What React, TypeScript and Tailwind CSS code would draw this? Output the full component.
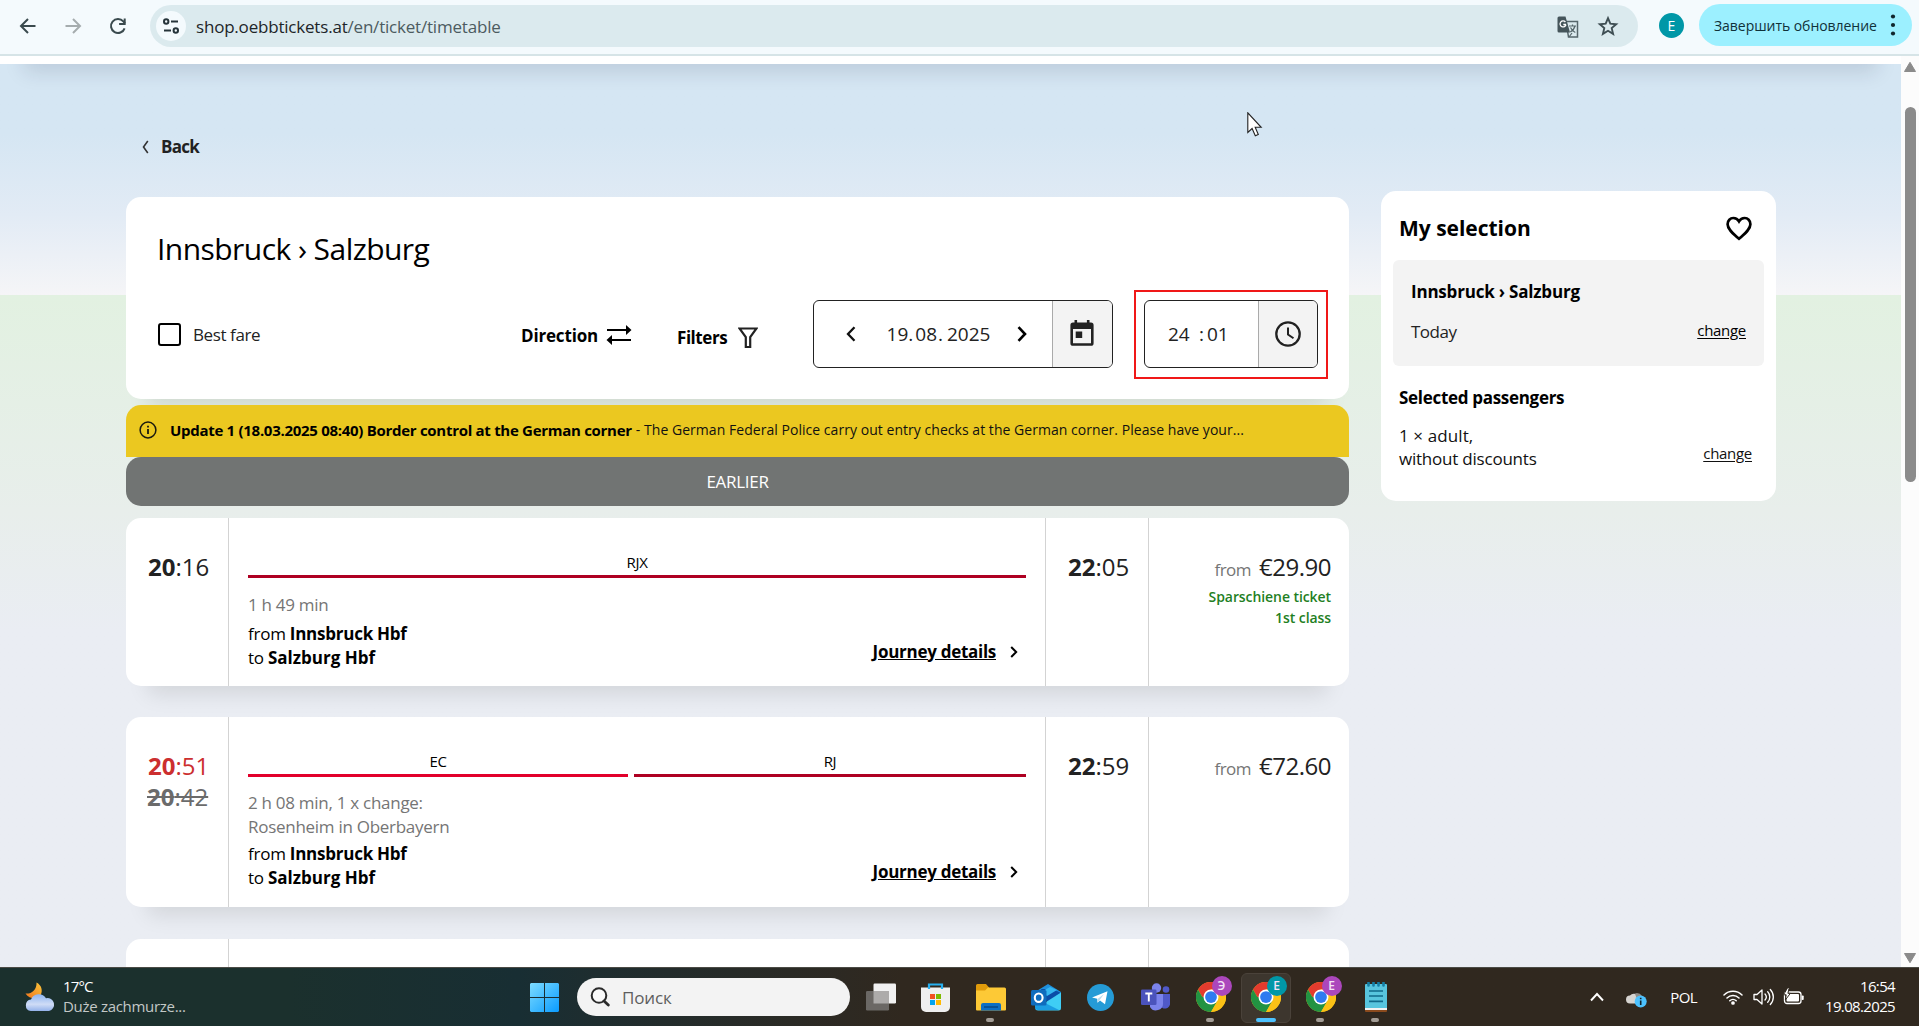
import React from "react";

/* ---------- Browser toolbar ---------- */

function Toolbar() {
  return (
    <header className="relative z-20 flex h-14 shrink-0 items-start border-b-2 border-[#d6e4e7] bg-[#f4fafd]">
      <div className="flex h-[52px] w-[150px] shrink-0 items-center gap-[21px] pl-4">
        <svg viewBox="0 0 24 24" className="size-6" fill="none" stroke="#3a4a4e" strokeWidth="2">
          <path d="M19.5 12H5.5M12 5l-7 7 7 7" />
        </svg>
        <svg viewBox="0 0 24 24" className="size-6" fill="none" stroke="#a5acae" strokeWidth="2">
          <path d="M4.500 12h14M12 5l7 7-7 7" />
        </svg>
        <svg viewBox="0 0 24 24" className="size-6" fill="none" stroke="#3a4a4e" strokeWidth="2">
          <path d="M18.600 14.300A7 7 0 1 1 17.300 7.400L19 9.300" />
          <path d="M18.700 4.500v5.600h-5.600" />
        </svg>
      </div>
      <div className="mt-[5px] flex h-[42px] w-[1488px] shrink-0 items-center rounded-full bg-[#dbeaee] pr-[18px] pl-1.5">
        <div className="flex size-[30px] items-center justify-center rounded-full bg-[#f4fafd]">
          <svg viewBox="0 0 18 18" className="size-[18px]" fill="none" stroke="#26343a" strokeWidth="2">
            <circle cx="4.200" cy="4.500" r="2.200" />
            <path d="M9 4.500h7M2 13.500h7" />
            <circle cx="13.800" cy="13.500" r="2.200" />
          </svg>
        </div>
        <div className="ml-2.5 pt-px text-[17px] tracking-[-0.2px] text-[#1d2528]">
          shop.oebbtickets.at<span className="text-[#4c5b60]">/en/ticket/timetable</span>
        </div>
        <svg viewBox="0 0 22 22" className="mt-px ml-auto size-[22px]" fill="none">
          <path d="M9 5.500h11.500v15.500h-9z" stroke="#56666b" strokeWidth="1.500" />
          <path d="M0.500 2a1.500 1.500 0 0 1 1.500-1.500h6.500L13 16.500H2A1.500 1.500 0 0 1 .5 15z" fill="#45555a" />
          <path d="M9 8.500H6.300M8.400 6A3 3 0 1 0 9 8.500" stroke="#fff" strokeWidth="1.300" />
          <path d="M12 10h7M15.500 8.500V10M18 10c-.8 3-2.600 5-4.800 6M13.500 11.500c1 2 2.600 4 4.800 5M12 21l3-4" stroke="#56666b" strokeWidth="1.200" />
        </svg>
        <svg viewBox="0 0 24 24" className="ml-[17px] size-6" fill="none" stroke="#3f4f54" strokeWidth="1.900">
          <path d="M12 4.200l2.300 5.500 5.900.5-4.500 3.900 1.400 5.800-5.100-3.100-5.100 3.100 1.400-5.800-4.500-3.900 5.900-.5z" />
        </svg>
      </div>
      <div className="mt-[13px] ml-[21px] flex size-[25px] shrink-0 items-center justify-center rounded-full bg-[#0097a7] text-[14px] text-white">
        E
      </div>
      <div className="mt-1 ml-[15px] flex h-[42px] w-[213px] shrink-0 items-center rounded-full bg-[#9cf0ff] pl-[15px]">
        <span className="text-[14px] tracking-[-0.05px] whitespace-nowrap text-[#10323a]">Завершить обновление</span>
        <svg viewBox="0 0 6 24" className="ml-[13px] h-6 w-1.5 shrink-0" fill="#10262c">
          <circle cx="3" cy="3.500" r="2.100" />
          <circle cx="3" cy="12" r="2.100" />
          <circle cx="3" cy="20.500" r="2.100" />
        </svg>
      </div>
    </header>
  );
}

/* ---------- Search header ---------- */

function SearchCard() {
  return (
    <section className="h-[202px] rounded-[15px] bg-white pl-8 shadow-[0_30px_20px_-22px_rgba(0,0,0,0.1)]">
      <h1 className="-ml-px h-[93px] pt-8 text-[30px] leading-10 tracking-[-0.55px] text-black">Innsbruck › Salzburg</h1>
      <div className="flex h-[89px] items-center">
        <label className="flex w-[363px] items-center gap-3 text-[17px] tracking-[-0.4px] text-[#222]">
          <span className="-mt-px size-[23px] rounded-[3px] border-2 border-black" />
          <span className="pt-px">Best fare</span>
        </label>
        <button className="flex w-[156px] items-center gap-2 text-[17px] font-bold tracking-[-0.17px]">
          <span className="pt-0.5">Direction</span>
          <svg viewBox="0 0 26 20" className="h-5 w-[26px]" fill="none" stroke="#000" strokeWidth="2.200">
            <path d="M1 5h22M3 15h22" />
            <path d="M20 0l5.500 5-5.500 5zM6 10l-5.500 5L6 20z" fill="#000" stroke="none" />
          </svg>
        </button>
        <button className="flex w-[136px] items-center gap-3 pt-1.5 text-[17px] font-bold tracking-[-0.45px]">
          Filters
          <svg viewBox="0 0 20 21" className="-ml-px h-[21px] w-5" fill="none" stroke="#222" strokeWidth="2.200">
            <path d="M1.500 1.500h17l-6.300 8.700V20H7.800v-9.800z" />
          </svg>
        </button>
        <div className="-mt-px flex h-[68px] w-[300px] overflow-hidden rounded-md border border-[#222]">
          <div className="flex flex-1 items-center pl-8">
            <svg viewBox="0 0 10 16" className="h-4 w-2.5" fill="none" stroke="#111" strokeWidth="2.300">
              <path d="M8.500 1.200L2 8l6.500 6.800" />
            </svg>
            <span className="flex w-[161px] justify-center pt-px pl-1 text-[19px] text-[#222]">
              <span>19</span>
              <span className="w-[7px]">.</span>
              <span>08</span>
              <span className="w-[10px] pl-px">.</span>
              <span>2025</span>
            </span>
            <svg viewBox="0 0 10 16" className="h-4 w-2.5" fill="none" stroke="#000" strokeWidth="2.600">
              <path d="M1.500 1.200L8 8l-6.500 6.800" />
            </svg>
          </div>
          <div className="flex w-[60px] items-center justify-center border-l border-[#aaa] bg-[#f3f3f3] pr-0.5 pb-0.5">
            <svg viewBox="0 0 24 26" className="h-[26px] w-6" fill="#222">
              <path fillRule="evenodd" d="M4.500 0h2.600v2.600h9.800V0h2.600v2.600H21a2.600 2.600 0 0 1 2.600 2.600v18A2.600 2.600 0 0 1 21 25.800H3A2.600 2.600 0 0 1 .4 23.200v-18A2.600 2.600 0 0 1 3 2.600h1.500zM3 9v14.200h18V9z" />
              <path d="M5.700 11.600h6.500v6.500H5.700z" />
            </svg>
          </div>
        </div>
        <div className="ml-[21px] h-[89px] w-[194px] border-2 border-[#f01818] p-2">
          <div className="flex h-[68px] overflow-hidden rounded-md border border-[#222]">
            <div className="flex flex-1 items-center pt-px pl-[23px] text-[19px] text-[#222]">
              <span className="w-[31px]">24</span>
              <span className="w-2">:</span>
              <span>01</span>
            </div>
            <div className="flex w-[59px] items-center justify-center border-l border-[#aaa] bg-[#f3f3f3]">
              <svg viewBox="0 0 26 26" className="size-[26px]" fill="none" stroke="#222" strokeWidth="2.300">
                <circle cx="13" cy="13" r="11.700" />
                <path d="M13 6.500v7l5.500 3.800" strokeWidth="2" />
              </svg>
            </div>
          </div>
        </div>
      </div>
    </section>
  );
}

function Notice() {
  return (
    <div className="relative mt-1.5 flex h-[52px] rounded-t-[15px] bg-[#ebc820] pt-[15px] pl-[13px] text-[15px] leading-5 whitespace-nowrap text-[#111]">
      <svg viewBox="0 0 18 18" className="mt-px size-[18px] shrink-0" fill="none" stroke="#1a1a10" strokeWidth="1.500">
        <circle cx="9" cy="9" r="7.900" />
        <path d="M9 8v5M9 4.800v1.600" strokeWidth="1.800" />
      </svg>
      <span className="pl-[13px] font-bold tracking-[-0.29px] text-black">
        Update 1 (18.03.2025 08:40) Border control at the German corner
      </span>
      <span className="pl-1 text-[14px] tracking-[0.04px]">
        - The German Federal Police carry out entry checks at the German corner. Please have your...
      </span>
    </div>
  );
}

/* ---------- Journey rows ---------- */

type Leg = { name: string; color: string; width: string };
type JourneyData = {
  height: string;
  dep: [string, string];
  late?: [string, string];
  arr: [string, string];
  legs: Leg[];
  info: string[];
  infoGap: string;
  price: string;
  note?: string[];
};

const journeys: JourneyData[] = [
  {
    height: "h-[168px]",
    dep: ["20", ":16"],
    arr: ["22", ":05"],
    legs: [{ name: "RJX", color: "bg-[#ae0022]", width: "w-full" }],
    info: ["1 h 49 min"],
    infoGap: "pt-[15px] pb-[5px]",
    price: "€29.90",
    note: ["Sparschiene ticket", "1st class"],
  },
  {
    height: "h-[190px] mt-[31px]",
    dep: ["20", ":42"],
    late: ["20", ":51"],
    arr: ["22", ":59"],
    legs: [
      { name: "EC", color: "bg-[#e2002b]", width: "w-[380px]" },
      { name: "RJ", color: "bg-[#ae0022]", width: "flex-1" },
    ],
    info: ["2 h 08 min, 1 x change:", "Rosenheim in Oberbayern"],
    infoGap: "pt-3.5 pb-1",
    price: "€72.60",
  },
];

function Time({ t, className }: { t: [string, string]; className: string }) {
  return (
    <div className={className}>
      <b>{t[0]}</b>
      {t[1]}
    </div>
  );
}

const timeBase = "text-[24px] leading-6 tracking-[0px] whitespace-nowrap";

function Journey({ j }: { j: JourneyData }) {
  return (
    <article
      className={`${j.height} grid shrink-0 grid-cols-[103px_817px_103px_1fr] rounded-[15px] bg-white shadow-[0_30px_20px_-22px_rgba(0,0,0,0.1)]`}
    >
      <div className="border-r border-[#d3d3d3] pt-[37px] pl-[22px]">
        {j.late && <Time t={j.late} className={`${timeBase} mb-[7px] text-[#cc2f2f]`} />}
        <Time t={j.dep} className={`${timeBase} ${j.late ? "-ml-px text-[#6b6b6b] line-through decoration-2" : "text-[#222]"}`} />
      </div>
      <div className="border-r border-[#d3d3d3] px-[19px] pt-[34px]">
        <div className="flex gap-1.5">
          {j.legs.map((leg) => (
            <div key={leg.name} className={leg.width}>
              <div className="h-[23px] text-center text-[15px] leading-5 tracking-[-0.3px] text-black">{leg.name}</div>
              <div className={`${leg.color} h-[3px]`} />
            </div>
          ))}
        </div>
        <div className={`${j.infoGap} text-[17px] leading-[23.500px] tracking-[-0.28px] text-[#757575]`}>
          {j.info.map((line) => (
            <div key={line}>{line}</div>
          ))}
        </div>
        <div className="flex items-end justify-between text-[17px] leading-6 text-black">
          <div className="tracking-[-0.25px]">
            <div>
              from <b>Innsbruck Hbf</b>
            </div>
            <div>
              to <b className="tracking-[0px]">Salzburg Hbf</b>
            </div>
          </div>
          <a className="flex items-center pb-1.5 font-bold tracking-[-0.28px]">
            <span className="underline underline-offset-1">Journey details</span>
            <svg viewBox="0 0 8 12" className="mr-2 ml-3.5 h-3 w-2" fill="none" stroke="#000" strokeWidth="2">
              <path d="M1.200 1L6.200 6l-5 5" />
            </svg>
          </a>
        </div>
      </div>
      <div className="border-r border-[#d3d3d3] pt-[37px] pl-[22px]">
        <Time t={j.arr} className={`${timeBase} text-[#222]`} />
      </div>
      <div className="pt-[35px] pr-[18px] text-right">
        <div className="text-[24px] leading-7 tracking-[-0.5px] text-[#222]">
          <span className="mr-2 text-[17px] tracking-[-0.5px] text-[#757575]">from</span>
          {j.price}
        </div>
        <div className="mt-0.5 text-[14px] leading-[21px] font-semibold tracking-[-0.08px] text-[#1f7f24]">
          {j.note?.map((n) => (
            <div key={n}>{n}</div>
          ))}
        </div>
      </div>
    </article>
  );
}

/* ---------- Sidebar ---------- */

function Selection() {
  return (
    <aside className="mt-[127px] ml-8 h-[310px] w-[395px] shrink-0 rounded-[15px] bg-white px-3 text-[17px] leading-6 text-black">
      <div className="flex h-[69px] items-center justify-between pt-[5px] pr-3 pl-1.5">
        <h2 className="text-[21px] leading-8 font-bold tracking-[-0.02px]">My selection</h2>
        <svg viewBox="0 0 26 25" className="h-[25px] w-[26px]" fill="none" stroke="#000" strokeWidth="2.700">
          <path d="M13 22.800C8 18.300 1.600 13.600 1.600 8.200 1.600 4.500 4.300 2 7.300 2 9.700 2 11.800 3.300 13 5.400 14.200 3.300 16.300 2 18.700 2c3 0 5.700 2.500 5.700 6.200 0 5.400-6.400 10.100-11.400 14.600z" />
        </svg>
      </div>
      <div className="h-[106px] rounded-md bg-[#f3f3f3] pt-5 pr-[18px] pl-[18px]">
        <div className="font-bold tracking-[-0.2px]">Innsbruck › Salzburg</div>
        <div className="mt-4 flex items-start justify-between">
          <span className="tracking-[-0.5px] text-[#222]">Today</span>
          <a className="text-[15px] leading-[21px] tracking-[-0.29px] underline underline-offset-2">change</a>
        </div>
      </div>
      <div className="mt-5 pl-1.5 font-bold tracking-[-0.3px]">Selected passengers</div>
      <div className="mt-3.5 flex items-end justify-between pr-3 pl-1.5 text-[#111]">
        <div className="leading-[23px] tracking-[-0.22px]">
          <div className="tracking-[0.1px]">1 × adult,</div>
          <div>without discounts</div>
        </div>
        <a className="pb-1.5 text-[15px] leading-[21px] tracking-[-0.29px] underline underline-offset-2">change</a>
      </div>
    </aside>
  );
}

/* ---------- Taskbar ---------- */

function Cell({ children, dot, active }: { children: React.ReactNode; dot?: boolean; active?: boolean }) {
  return (
    <div className="relative flex h-[59px] w-[55px] shrink-0 items-center justify-center">
      {active && <div className="absolute top-[5px] left-[3px] h-[50px] w-[50px] rounded-md border border-[#4a423a] bg-[#3d362e]" />}
      <div className="relative">{children}</div>
      {dot && <div className="absolute bottom-[5px] left-[23px] h-1 w-2 rounded-full bg-[#a39d96]" />}
      {active && <div className="absolute bottom-[5px] left-[18px] h-1 w-5 rounded-full bg-[#4cc2ff]" />}
    </div>
  );
}

function Chrome({ letter, badge }: { letter: string; badge: string }) {
  return (
    <div className="relative">
      <svg viewBox="0 0 48 48" className="size-[30px]">
        <circle cx="24" cy="24" r="24" fill="#fbc116" />
        <path d="M3.200 12A24 24 0 0 1 44.800 12H24L13.600 30z" fill="#e33b2e" />
        <path d="M3.200 12A24 24 0 0 0 24 48L34.400 30 24 24H10.100z" fill="#229342" />
        <path d="M44.800 12A24 24 0 0 1 24 48L34.400 30 24 12z" fill="#fbc116" />
        <circle cx="24" cy="24" r="12" fill="#fff" />
        <circle cx="24" cy="24" r="9.400" fill="#2f7bf0" />
      </svg>
      <div className={`${badge} absolute -top-1.5 left-4 flex size-5 items-center justify-center rounded-full text-[12px] leading-none font-semibold text-[#f3e3f6]`}>
        {letter}
      </div>
    </div>
  );
}

function Taskbar() {
  return (
    <footer className="relative z-20 flex h-[59px] shrink-0 items-center border-t border-[#4b4b45] bg-linear-to-r from-[#1b302d] from-15% via-[#182e33] via-27% to-[#30281f] to-47% text-white">
      <div className="flex w-[517px] shrink-0 items-center pl-6">
        <svg viewBox="0 0 32 32" className="size-8">
          <defs>
            <linearGradient id="moon" x1="0" y1="1" x2="1" y2="0">
              <stop offset="0" stopColor="#f0741d" />
              <stop offset="1" stopColor="#fbc63a" />
            </linearGradient>
            <linearGradient id="cloud" x1="0" y1="0" x2="0" y2="1">
              <stop offset="0" stopColor="#8db4f0" />
              <stop offset="0.600" stopColor="#cfdcf6" />
              <stop offset="1" stopColor="#94b2ea" />
            </linearGradient>
          </defs>
          <path d="M12.500 1.500c5 2.500 6.500 8 4.200 12.500C14 19 5.500 18.500 1.500 12.500c5 .8 11.500-3 11-11z" fill="url(#moon)" />
          <path d="M6.800 30A5.800 5.800 0 0 1 7 18.500 8.500 8.500 0 0 1 22 17.200a6.500 6.500 0 0 1 3 12.800z" fill="url(#cloud)" />
        </svg>
        <div className="-mt-0.5 ml-[7px] text-[15px] leading-5">
          <div className="tracking-[-0.86px]">17°C</div>
          <div className="tracking-[-0.3px] text-[#c3c8c7]">Duże zachmurze...</div>
        </div>
      </div>
      <div className="flex w-[60px] shrink-0 pl-[13px]">
        <svg viewBox="0 0 29 29" className="size-[29px]">
          <defs>
            <linearGradient id="win" x1="0" y1="0" x2="1" y2="1">
              <stop offset="0" stopColor="#7ddcff" />
              <stop offset="1" stopColor="#0a9bff" />
            </linearGradient>
          </defs>
          <path d="M1 0h13v14H0V1zM15 0h13l1 1v13H15zM0 15h14v14H1l-1-1zM15 15h14v13l-1 1H15z" fill="url(#win)" />
        </svg>
      </div>
      <div className="flex h-[38px] w-[273px] shrink-0 items-center rounded-full bg-[#f3f3f3] pl-[13px]">
        <svg viewBox="0 0 20 20" className="size-5" fill="none" stroke="#2b2b2b" strokeWidth="2">
          <circle cx="9" cy="8.500" r="7.300" fill="#fafafa" />
          <path d="M14 14l4.300 4" strokeWidth="2.800" strokeLinecap="round" />
        </svg>
        <span className="ml-3 pt-px text-[17px] tracking-[-0.14px] text-[#5e5e5e]">Поиск</span>
      </div>
      <div className="ml-[3px] flex shrink-0">
        <Cell>
          <svg viewBox="0 0 30 28" className="h-7 w-[30px]">
            <rect x="7.500" y="0.500" width="22.500" height="20" rx="1.200" fill="#f1f1f1" />
            <rect x="0" y="8" width="23" height="19.500" rx="1.200" fill="#6b6865" />
            <path d="M7.500 8H23v12.500H7.500z" fill="#adabaa" />
          </svg>
        </Cell>
        <Cell>
          <svg viewBox="0 0 29 29" className="size-[29px]">
            <path d="M0 4.500h29V24a5 5 0 0 1-5 5H5a5 5 0 0 1-5-5z" fill="#efefef" />
            <path d="M8 6V1.500h13V6" fill="none" stroke="#27b0f0" strokeWidth="2.200" />
            <path d="M9 11h5v5H9z" fill="#f25022" />
            <path d="M15 11h5v5h-5z" fill="#7fba00" />
            <path d="M9 17h5v5H9z" fill="#00a4ef" />
            <path d="M15 17h5v5h-5z" fill="#ffb900" />
          </svg>
        </Cell>
        <Cell dot>
          <svg viewBox="0 0 30 27" className="h-[27px] w-[30px]">
            <path d="M0 1.500A1.500 1.500 0 0 1 1.500 0H10l3 3.500v5H0z" fill="#e09b0b" />
            <path d="M0 6.500h9l3-3h16.500A1.500 1.500 0 0 1 30 5v20.500a1 1 0 0 1-1 1H1a1 1 0 0 1-1-1z" fill="#fdc936" />
            <path d="M5 26.500V21a2 2 0 0 1 2-2h16a2 2 0 0 1 2 2v5.500z" fill="#0d6fc4" />
            <path d="M8 23h14" stroke="#07437e" strokeWidth="1.300" />
          </svg>
        </Cell>
        <Cell>
          <svg viewBox="0 0 30 27" className="h-[27px] w-[30px]">
            <path d="M4 8L17 0l13 8v4H4z" fill="#1f8fdc" />
            <path d="M10 5l12 0 8 4-14 9z" fill="#0a4ea8" />
            <path d="M10 8l9-5 7 3-10 6z" fill="#35b8f1" />
            <path d="M4 25L30 8.500V24a2.500 2.500 0 0 1-2.500 2.500H7A3 3 0 0 1 4 24z" fill="#3fcdf5" />
            <path d="M4 14l24 12H7a3 3 0 0 1-3-3z" fill="#1b9de2" />
            <rect x="0" y="6" width="15.500" height="15.500" rx="1.500" fill="#0f6cbd" />
            <ellipse cx="7.700" cy="13.700" rx="3.900" ry="4.200" fill="none" stroke="#fff" strokeWidth="2.100" />
          </svg>
        </Cell>
        <Cell>
          <svg viewBox="0 0 27 27" className="size-[27px]">
            <circle cx="13.500" cy="13.500" r="13.500" fill="#259bd6" />
            <path d="M5 13.600L20.500 7.200 18 20.200l-5-3.700-2.500 2.300-.3-4z" fill="#fff" />
            <path d="M10.500 15l6.500-5-4.500 6.200-2 2.400z" fill="#b9dcee" />
          </svg>
        </Cell>
        <Cell>
          <svg viewBox="0 0 30 28" className="h-7 w-[30px]">
            <circle cx="15.500" cy="5" r="4.700" fill="#7b83eb" />
            <circle cx="25" cy="6.500" r="3.300" fill="#5059c9" />
            <path d="M19 11h10v8.500a5 5 0 0 1-10 2z" fill="#5059c9" />
            <path d="M9 11h13v9a7 7 0 0 1-13 4z" fill="#7b83eb" />
            <rect x="0" y="6.500" width="15.500" height="15.500" rx="1.300" fill="#4b53bc" />
            <path d="M4.300 10.500h7M7.800 10.500v8" stroke="#fff" strokeWidth="1.900" />
          </svg>
        </Cell>
        <Cell dot>
          <Chrome letter="Э" badge="bg-[#ab47bc]" />
        </Cell>
        <Cell active>
          <Chrome letter="E" badge="bg-[#0097a7]" />
        </Cell>
        <Cell dot>
          <Chrome letter="E" badge="bg-[#ab47bc]" />
        </Cell>
        <Cell dot>
          <svg viewBox="0 0 22 30" className="h-[30px] w-[22px]">
            <rect x="0" y="26" width="22" height="4" rx="1" fill="#8a4a1d" />
            <path d="M0 24h22v4H0z" fill="#f2f2f2" />
            <path d="M0 3a1 1 0 0 1 1-1h20a1 1 0 0 1 1 1v23H0z" fill="#58c5de" />
            <path d="M4 9h14M4 14h14M4 19.300h14" stroke="#106a8a" strokeWidth="1.700" />
            <path d="M3.500.5v3M8.500.5v3M13.500.5v3M18.500.5v3" stroke="#137ea6" strokeWidth="2.600" strokeLinecap="round" />
          </svg>
        </Cell>
      </div>
      <div className="ml-auto flex shrink-0 items-center pr-6">
        <svg viewBox="0 0 14 10" className="h-2.5 w-3.5" fill="none" stroke="#fff" strokeWidth="1.900">
          <path d="M1 8.500L7 2l6 6.500" />
        </svg>
        <svg viewBox="0 0 21 18" className="mt-1 ml-[22px] h-[18px] w-[21px]">
          <path d="M5 7A6 5.500 0 0 1 16 6l1 7H8z" fill="#8f8d8a" />
          <path d="M4 13.500A4 4 0 0 1 4 5.500 5 5 0 0 1 9 4l4 9.500z" fill="#d6d4d1" />
          <circle cx="14.700" cy="11.500" r="6" fill="#4cc2ff" />
          <path d="M14.700 10.500v4.500M14.700 7.700v1.600" stroke="#10222c" strokeWidth="1.600" />
        </svg>
        <span className="ml-[23px] text-[15px] tracking-[-0.6px]">POL</span>
        <svg viewBox="0 0 20 16" className="ml-[26px] h-4 w-5" fill="none" stroke="#fff" strokeWidth="1.500" strokeLinecap="round">
          <path d="M1 6a12.800 12.800 0 0 1 18 0M4 9a8.600 8.600 0 0 1 12 0M6.800 11.800a4.600 4.600 0 0 1 6.400 0" />
          <circle cx="10" cy="14" r="1.100" fill="#fff" />
        </svg>
        <svg viewBox="0 0 21 18" className="ml-2.5 h-[18px] w-[21px]" fill="none" stroke="#fff" strokeWidth="1.300" strokeLinecap="round" strokeLinejoin="round">
          <path d="M1 6.500h3L9 2v14l-5-4.500H1zM12 6a4.500 4.500 0 0 1 0 6M14.700 3.800a7.500 7.500 0 0 1 0 10.400M17.300 1.500a10.800 10.800 0 0 1 0 15" />
        </svg>
        <svg viewBox="0 0 21 17" className="mb-0.5 ml-[9px] h-[17px] w-[21px]">
          <rect x="1.500" y="4" width="16.500" height="11.500" rx="2.500" fill="none" stroke="#fff" strokeWidth="1.300" />
          <rect x="3.500" y="6" width="12.500" height="7.500" rx="1" fill="#fff" />
          <rect x="18.700" y="7.500" width="2" height="4.500" rx="0.800" fill="#fff" />
          <path d="M4.800-.5L.5 6.800h2.700L2.300 12 7.400 5.300H4.900L6.300-.5z" fill="#fff" stroke="#30281f" strokeWidth="1" />
        </svg>
        <div className="-mt-0.5 ml-[21px] text-right text-[15px] leading-5 tracking-[-0.65px]">
          <div>16:54</div>
          <div>19.08.2025</div>
        </div>
      </div>
    </footer>
  );
}

/* ---------- Page ---------- */

export default function App() {
  return (
    <div className="relative flex h-[1026px] w-[1919px] flex-col overflow-hidden bg-white font-['Open_Sans','Noto_Sans',sans-serif]">
      <Toolbar />
      <div className="flex min-h-0 flex-1">
        <div className="flex min-w-0 flex-1 flex-col overflow-hidden">
          {/* Lower edge of the site header, most of it scrolled out of view */}
          <div className="relative z-10 -mt-[72px] h-20 shrink-0 bg-white shadow-[0_32px_20px_-24px_rgba(20,30,60,0.13)]" />
          <div className="grid min-h-0 flex-1 grid-rows-[231px_1fr] overflow-hidden">
            <div className="col-start-1 row-start-1 bg-linear-to-b from-[#d5e6f3] from-30% via-[#e2ebf5] via-65% to-[#f5f5f7]" />
            <div className="col-start-1 row-start-2 bg-linear-to-b from-[#e2f1e1] via-[#e8eeeb] via-32% to-[#eaedf3] to-50%" />
            <div className="col-start-1 row-span-2 row-start-1 flex min-h-0 pl-[126px]">
              <main className="w-[1223px] shrink-0">
                <a className="flex h-[133px] items-center pt-[33px] pl-4 text-[17px] font-bold tracking-[-0.7px] text-[#222]">
                  <svg viewBox="0 0 7 14" className="mr-3 h-3.5 w-[7px]" fill="none" stroke="#333" strokeWidth="1.600">
                    <path d="M5.800 1L1.500 7l4.300 6" />
                  </svg>
                  Back
                </a>
                <SearchCard />
                <Notice />
                <button className="mb-3 flex h-[49px] w-full items-center justify-center rounded-[15px] bg-[#717473] text-[17px] tracking-[-0.3px] text-white">
                  EARLIER
                </button>
                {journeys.map((j) => (
                  <Journey key={j.price} j={j} />
                ))}
                <div className="mt-8 grid h-[120px] grid-cols-[103px_817px_103px_1fr] rounded-[15px] bg-white">
                  <div className="border-r border-[#d3d3d3]" />
                  <div className="border-r border-[#d3d3d3]" />
                  <div className="border-r border-[#d3d3d3]" />
                </div>
              </main>
              <Selection />
            </div>
          </div>
        </div>
        <div className="flex w-[18px] shrink-0 flex-col items-center bg-[#fcfcfc] pt-1.5 pr-1 pb-1 pl-1">
          <svg viewBox="0 0 12 10" className="h-2.5 w-3" fill="#8b8b8b">
            <path d="M6 .3L11.500 9.500H.5z" stroke="#8b8b8b" strokeLinejoin="round" />
          </svg>
          <div className="mt-[35px] h-[375px] w-[11px] rounded-full bg-[#8b8b8b]" />
          <svg viewBox="0 0 12 10" className="mt-auto h-2.5 w-3" fill="#8b8b8b">
            <path d="M6 9.700L11.500.5H.5z" stroke="#8b8b8b" strokeLinejoin="round" />
          </svg>
        </div>
      </div>
      <Taskbar />
      {/* Mouse pointer floating over the page */}
      <svg viewBox="0 0 16 25" className="absolute top-[112px] left-[1247px] z-20 h-[25px] w-4">
        <path d="M.8.8v19.700l4.300-4 3.200 7.300 3-1.300-3.100-7.200h6z" fill="#fff" stroke="#222" strokeWidth="1.100" />
      </svg>
    </div>
  );
}
